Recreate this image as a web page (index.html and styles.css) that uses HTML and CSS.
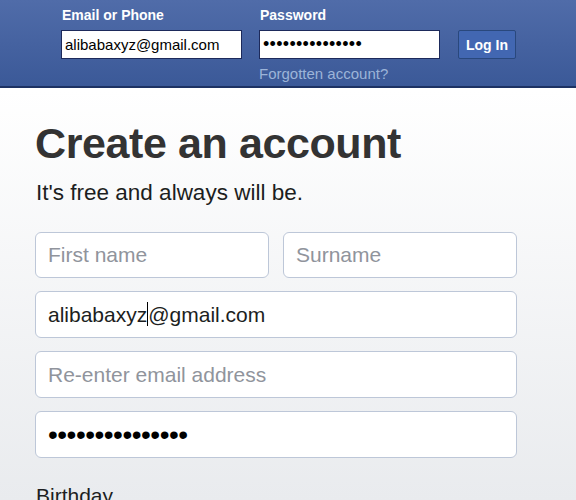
FILE: index.html
```html
<!DOCTYPE html>
<html>
<head>
<meta charset="utf-8">
<link rel="stylesheet" href="styles.css">
</head>
<body>
<header class="topbar">
  <div class="login">
    <div class="field">
      <label class="top-label">Email or Phone</label>
      <div class="top-input">alibabaxyz@gmail.com</div>
    </div>
    <div class="field">
      <label class="top-label">Password</label>
      <div class="top-input dots-small">•••••••••••••••</div>
      <a class="forgot">Forgotten account?</a>
    </div>
    <div class="field">
      <span class="top-label empty">&nbsp;</span>
      <button class="login-btn">Log In</button>
    </div>
  </div>
</header>
<main class="content">
  <h1 class="title">Create an account</h1>
  <p class="subtitle">It's free and always will be.</p>
  <div class="form">
    <div class="row two">
      <div class="box placeholder">First name</div>
      <div class="box placeholder">Surname</div>
    </div>
    <div class="box value">alibabaxyz<span class="caret"></span>@gmail.com</div>
    <div class="box placeholder">Re-enter email address</div>
    <div class="box value dots">•••••••••••••••</div>
  </div>
  <div class="birthday">Birthday</div>
</main>
</body>
</html>
```
FILE: styles.css
```css
* { box-sizing: border-box; }
html, body { margin: 0; height: 100%; }
body {
  font-family: "Liberation Sans", Arial, sans-serif;
  background: linear-gradient(#ffffff 90px, #e9ebee 500px);
  overflow: hidden;
}
.topbar {
  height: 88px;
  background: linear-gradient(#506ca9, #3b5998);
  border-bottom: 2px solid #1d3263;
}
.login {
  display: flex;
  padding: 6px 0 0 61px;
}
.field { display: flex; flex-direction: column; margin-right: 17px; }
.field:nth-child(2) { margin-right: 18px; }
.top-label {
  color: #fff;
  font-size: 14px;
  font-weight: bold;
  line-height: 18px;
  margin: 0 0 6px 1px;
}
.top-input {
  width: 181px;
  height: 29px;
  background: #fff;
  border: 1px solid #1d2a5b;
  font-size: 15px;
  line-height: 27px;
  padding-left: 3px;
  color: #000;
  white-space: nowrap;
}
.dots-small { font-size: 18px; letter-spacing: 0.3px; }
.forgot {
  color: #9cb4d8;
  font-size: 15px;
  line-height: 18px;
  margin-top: 6px;
}
.login-btn {
  width: 58px;
  height: 29px;
  background: #4267b2;
  border: 1px solid #29487d;
  border-radius: 2px;
  color: #fff;
  font-family: "Liberation Sans", Arial, sans-serif;
  font-size: 14px;
  font-weight: bold;
  padding: 0;
}
.content { padding: 0 0 0 35px; }
.title {
  margin: 30px 0 0 0;
  font-size: 43px;
  line-height: 50px;
  font-weight: bold;
  color: #333;
  letter-spacing: -0.4px;
}
.subtitle {
  margin: 12px 0 0 1px;
  font-size: 22.5px;
  line-height: 26px;
  color: #1c1e21;
}
.form {
  width: 482px;
  margin-top: 26px;
  display: flex;
  flex-direction: column;
  gap: 13px;
}
.row.two { display: flex; gap: 14px; }
.row.two .box { flex: 1; height: 46px; line-height: 44px; }
.box {
  height: 47px;
  background: #fff;
  border: 1px solid #bdc7d8;
  border-radius: 6px;
  font-size: 21px;
  line-height: 45px;
  padding-left: 12px;
  white-space: nowrap;
}
.placeholder { color: #90949c; }
.value { color: #1c1e21; }
.caret {
  display: inline-block;
  width: 1px;
  height: 24px;
  background: #000;
  vertical-align: -4px;
}
.dots { font-size: 28px; letter-spacing: -0.5px; color: #000; }
.birthday {
  margin: 25px 0 0 1px;
  font-size: 21px;
  line-height: 26px;
  color: #1c1e21;
}
```
